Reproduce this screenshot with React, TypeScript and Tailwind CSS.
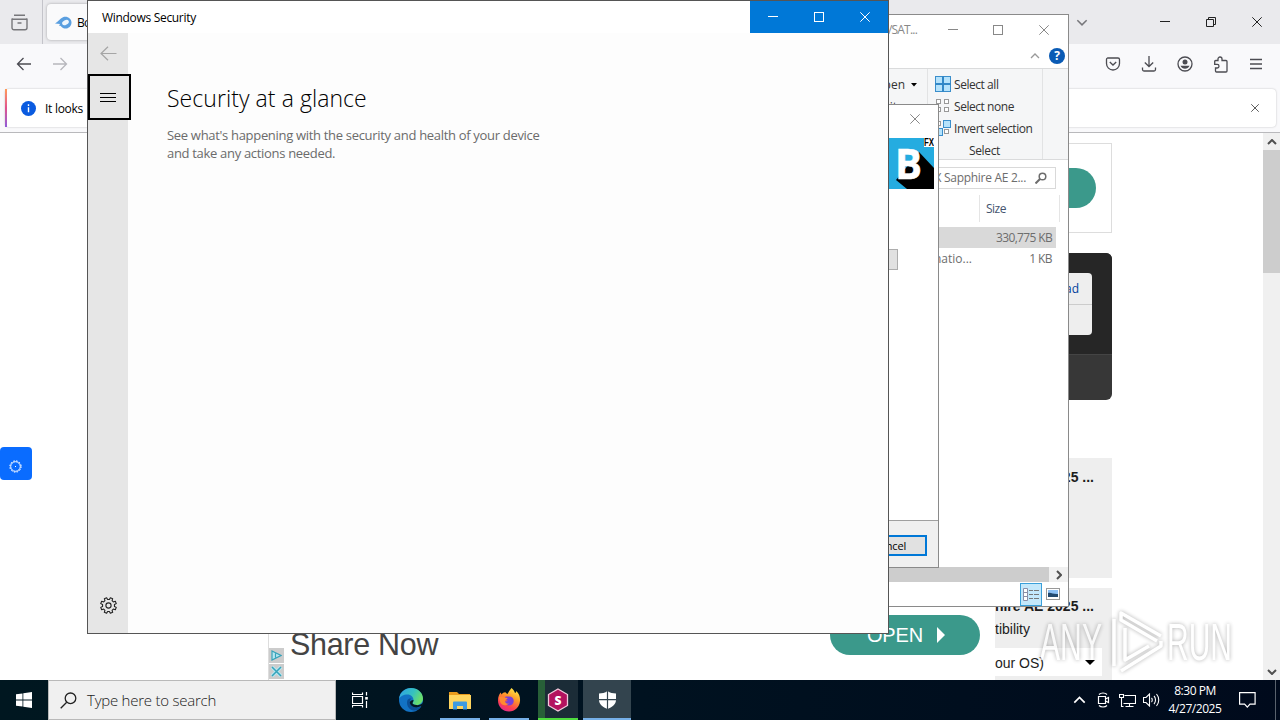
import type { ReactNode } from "react";

const stroke = { fill: "none", stroke: "currentColor" };

function CloseGlyph({ size = 10 }: { size?: number }) {
    return (
        <svg width={size} height={size} viewBox="0 0 10 10" {...stroke}>
            <path d="M.3 .3l9.400 9.400M9.700 .3L.3 9.700" />
        </svg>
    );
}

function MinGlyph() {
    return (
        <svg width="10" height="10" viewBox="0 0 10 10" {...stroke}>
            <path d="M0 4.500h10" />
        </svg>
    );
}

function MaxGlyph() {
    return (
        <svg width="10" height="10" viewBox="0 0 10 10" {...stroke}>
            <rect x=".5" y=".5" width="9" height="9" />
        </svg>
    );
}

function Arrow({ flip = false }: { flip?: boolean }) {
    return (
        <svg width="16" height="14" viewBox="0 0 16 14" {...stroke} strokeWidth="1.3" className={flip ? "rotate-180" : ""}>
            <path d="M15 7H1.5M7.5 1l-6 6 6 6" />
        </svg>
    );
}

function Chevron({ className = "" }: { className?: string }) {
    return (
        <svg width="10" height="6" viewBox="0 0 10 6" {...stroke} strokeWidth="1.3" className={className}>
            <path d="M1 5l4-4 4 4" />
        </svg>
    );
}

/* ---------- Browser ---------- */

function BrowserTabs() {
    return (
        <div className="flex h-11 items-center bg-[#eaeaed]">
            <div className="flex h-full w-[43px] items-center justify-end border-r border-[#c4c4ca] pr-[14px] text-[#77777b]">
                <svg width="17" height="17" viewBox="0 0 17 17" {...stroke} strokeWidth="1.4">
                    <path d="M3 1.2h11M1 5.2h15v8.6a2 2 0 0 1-2 2H3a2 2 0 0 1-2-2zM1 5.5l1.2-1M16 5.5l-1.2-1M6.5 9h4" />
                </svg>
            </div>
            <div className="ml-[4px] flex h-9 w-[200px] items-center gap-[5px] rounded bg-[#fafafb] pl-2 shadow-[0_0_3px_rgba(0,0,0,0.3)]">
                <svg width="17" height="13" viewBox="0 0 17 13">
                    <path d="M0 7.500C3 6 5 2.500 8 1.200 12 -.5 16.500 2.500 16.500 6.500S13 13 9.500 12.500C6.500 12 6.500 9.500 4 9.800L5 8z" fill="#5a9fe0" />
                    <ellipse cx="10.500" cy="6.500" rx="3.600" ry="2.300" transform="rotate(-30 10.500 6.500)" fill="#eef6fd" />
                </svg>
                <span className="pt-px text-[12px] tracking-[-0.8px]">Bo</span>
            </div>
            <div className="flex-1" />
            <Chevron className="mr-[54px] h-[7px] w-3 rotate-180 text-[#77777b]" />
            <div className="flex items-center text-[#222]">
                <span className="flex w-[46px] justify-center"><MinGlyph /></span>
                <span className="flex w-[46px] justify-center">
                    <svg width="10" height="10" viewBox="0 0 10 10" {...stroke}>
                        <path d="M.5 2.500h7v7h-7zM2.500 2.500v-2h7v7h-2" />
                    </svg>
                </span>
                <span className="flex w-[46px] justify-center"><CloseGlyph /></span>
            </div>
        </div>
    );
}

function BrowserNav() {
    return (
        <div className="flex h-11 items-center bg-[#f9f9fb] pr-[17px] pb-[4px] pl-4 text-[#4c4c52]">
            <Arrow />
            <div className="ml-5 text-[#b7b7bc]"><Arrow flip /></div>
            <div className="flex-1" />
            <div className="flex items-center gap-5">
                <svg width="16" height="14" viewBox="0 0 16 14" {...stroke} strokeWidth="1.3">
                    <path d="M2.500 1h10.500a1.500 1.500 0 0 1 1.500 1.500V6.500a6.500 6.500 0 0 1-13 0V2.500A1.500 1.500 0 0 1 2.500 1zM4.800 5l3.200 3 3.200-3" />
                </svg>
                <svg width="16" height="16" viewBox="0 0 16 16" {...stroke} strokeWidth="1.3">
                    <path d="M8 0v10.500M3.800 6.500L8 10.500l4.200-4M1.500 11.500v2a1.500 1.500 0 0 0 1.500 1.500h10a1.500 1.500 0 0 0 1.500-1.500v-2" />
                </svg>
                <svg width="16" height="16" viewBox="0 0 16 16" {...stroke} strokeWidth="1.3">
                    <circle cx="8" cy="8" r="7" />
                    <circle cx="8" cy="6" r="2.500" fill="currentColor" stroke="none" />
                    <path d="M3.500 9.800h9c-.8 2-2.500 3-4.500 3s-3.700-1-4.500-3z" fill="currentColor" stroke="none" />
                </svg>
                <svg width="16" height="17" viewBox="0 0 16 17" {...stroke} strokeWidth="1.300">
                    <path d="M5 4.500V3a2 2 0 0 1 4 0v1.500h4a1 1 0 0 1 1 1V15a1 1 0 0 1-1 1H3.500a1 1 0 0 1-1-1v-3h1.700a1.700 1.700 0 0 0 0-3.600H1.700V5.500a1 1 0 0 1 1-1z" />
                </svg>
                <svg width="14" height="12" viewBox="0 0 14 12" {...stroke} strokeWidth="1.300">
                    <path d="M1 1.500h12M1 6h12M1 10.500h12" />
                </svg>
            </div>
        </div>
    );
}

function BrowserNotice() {
    return (
        <div className="flex h-[45px] items-start border-b border-[#b9b9bc] bg-[#f9f9fb] pr-1 pl-[5px]">
            <div className="mt-px flex h-[38px] flex-1 items-center rounded bg-white shadow-[0_0_2px_rgba(0,0,0,0.25)]">
                <div className="h-full w-[2px] bg-linear-to-b from-[#ff9a55] via-[#e0508c] to-[#9059d8]" />
                <svg width="15" height="15" viewBox="0 0 15 15" className="ml-[14px]">
                    <circle cx="7.500" cy="7.500" r="7.500" fill="#0a5be0" />
                    <path d="M7.500 6.300v5M7.500 3.300v1.600" stroke="#fff" strokeWidth="1.400" />
                </svg>
                <span className="ml-[9px] pt-px text-[12px] tracking-[-0.28px]">It looks</span>
                <div className="flex-1" />
                <span className="mr-[17px] text-[#333]"><CloseGlyph size={8} /></span>
            </div>
        </div>
    );
}

function AdBanner() {
    return (
        <div className="mt-auto flex h-[90px] w-full border-x border-[#ddd] bg-white font-['Liberation_Sans',Arial,sans-serif]">
            <div className="flex w-[15px] flex-col justify-end gap-px pb-px">
                <span className="flex h-[15px] items-center justify-center bg-[#ccc]">
                    <svg width="11" height="11" viewBox="0 0 11 11" fill="#b8e7f1" stroke="#36a3ba" strokeWidth="1.200"><path d="M1 1l9 4.500-9 4.500zM4.500 3.500v4" /></svg>
                </span>
                <span className="flex h-[15px] items-center justify-center bg-[#ccc]">
                    <svg width="11" height="11" viewBox="0 0 11 11" fill="none">
                        <path d="M1 1l9 9M10 1l-9 9" stroke="#b8e7f1" strokeWidth="3.500" />
                        <path d="M1 1l9 9M10 1l-9 9" stroke="#36a3ba" strokeWidth="1.500" />
                    </svg>
                </span>
            </div>
            <span className="ml-[6px] pt-[36px] text-[30.500px] leading-[36px] tracking-[-0.3px] text-[#444]">Share Now</span>
            <div className="flex-1" />
            <div className="mt-[25px] mr-[15px] flex h-10 w-[150px] items-center rounded-full bg-[#3b998b] pl-[37px] text-[20px] tracking-[-0.2px] text-white">
                OPEN
                <svg width="8" height="16" viewBox="0 0 8 16" className="ml-[14px]"><path d="M0 0l8 8-8 8z" fill="#fff" /></svg>
            </div>
        </div>
    );
}

function PageAside() {
    return (
        <div className="flex h-[547px] w-[117px] flex-col overflow-hidden pt-[10px] font-['Liberation_Sans',Arial,sans-serif] text-[#1c1c1c]">
            <div className="flex h-[90px] shrink-0 items-center justify-end border border-[#ddd] pr-[15px]">
                <div className="h-10 w-[90px] rounded-full bg-[#3b998b]" />
            </div>
            <div className="mt-5 flex h-[147px] shrink-0 flex-col overflow-hidden rounded-md bg-[#373737]">
                <div className="flex h-[102px] justify-end border-b border-[#444] bg-[#262626] pt-5 pr-5">
                    <div className="h-[62px] w-[90px] rounded bg-[#eee]">
                        <div className="h-8 border-b border-[#ccc] pr-[13px] text-right font-['Open_Sans','Noto_Sans',sans-serif] text-[12px] leading-8 text-[#003e9c]">ad</div>
                    </div>
                </div>
            </div>
            <div className="mt-[58px] h-[120px] shrink-0 bg-[#eee] pt-[9px] pr-[18px] text-right text-[14px] leading-5 font-bold">25 ...</div>
            <div className="mt-[10px] h-[92px] shrink-0 bg-[#eee] pt-[8px]">
                <div className="flex h-5 justify-end pr-[18px] text-[14px] leading-5 font-bold whitespace-nowrap">phire AE 2025 ...</div>
                <div className="h-8 w-[35px] text-right text-[14px] leading-[27px] whitespace-nowrap">tibility</div>
                <div className="mr-[10px] flex h-[28px] items-center justify-between bg-white pr-[7px]">
                    <span className="w-[46px] pt-[2px] text-right text-[14px] whitespace-nowrap">our OS)</span>
                    <svg width="10" height="5" viewBox="0 0 10 5"><path d="M0 0h10l-5 5z" /></svg>
                </div>
            </div>
        </div>
    );
}

function PageScrollbar() {
    return (
        <div className="flex w-[17px] flex-col items-center bg-[#f0f0f0] text-[#505050]">
            <span className="flex h-[17px] items-center"><Chevron className="stroke-2" /></span>
            <div className="h-[123px] w-full bg-[#cdcdcd]" />
            <div className="flex-1" />
            <span className="flex h-[17px] items-center"><Chevron className="rotate-180 stroke-2" /></span>
        </div>
    );
}

function Browser() {
    return (
        <div className="flex h-[680px] flex-col">
            <BrowserTabs />
            <BrowserNav />
            <BrowserNotice />
            <div className="flex h-[547px] bg-white">
                <div className="w-[268px] pt-[314px]">
                    <div className="flex h-[33px] w-8 items-center justify-center rounded bg-[#0a6cff] pt-[6px] pr-px text-white">
                        <svg width="13" height="13" viewBox="0 0 13 13" {...stroke}>
                            <circle cx="6.500" cy="6.500" r="4.800" />
                            <circle cx="6.500" cy="6.500" r="5.700" strokeDasharray="1.490 1.490" />
                            <path d="M6 7l1-1" />
                        </svg>
                    </div>
                </div>
                <div className="flex w-[728px]"><AdBanner /></div>
                <div className="-ml-px"><PageAside /></div>
                <div className="flex-1" />
                <PageScrollbar />
            </div>
        </div>
    );
}

/* ---------- File explorer ---------- */

const selectItems = [
    { label: "Select all", filled: [true, true, true, true] },
    { label: "Select none", filled: [false, false, false, false] },
    { label: "Invert selection", filled: [false, true, true, false] },
];

function SelectIcon({ filled }: { filled: boolean[] }) {
    const all = filled.every(Boolean);
    return (
        <svg width="16" height="16" viewBox="0 0 16 16">
            {filled.map((on, i) => {
                const size = on ? 7 : 4;
                const x = (i % 2) * 8 + (on ? 0.5 : 1.5);
                const y = Math.floor(i / 2) * 8 + (on ? 0.5 : 1.5);
                return <rect key={i} x={x} y={y} width={size} height={size} fill={on ? "#b5e2fb" : "#fff"} stroke={on ? "#3a8ecb" : "#999"} />;
            })}
            {all && <path d="M8 0v16M0 8h16" stroke="#2b82c4" />}
        </svg>
    );
}

function Explorer() {
    return (
        <div className="absolute top-[14px] left-[699px] flex h-[593px] w-[370px] flex-col border border-[#8a8a8a] bg-white text-[12px] text-[#333]">
            <div className="flex h-[29px] items-center text-[#888]">
                <span className="w-[218px] text-right tracking-[-0.8px]">/SAT...</span>
                <div className="ml-[13px] flex">
                    <span className="flex w-[46px] justify-center"><MinGlyph /></span>
                    <span className="flex w-[44px] justify-center"><MaxGlyph /></span>
                    <span className="flex w-[48px] justify-center"><CloseGlyph /></span>
                </div>
            </div>
            <div className="flex h-[25px] items-center justify-end gap-[9px] border-b border-[#dadbdc] pr-[3px] text-[#999]">
                <Chevron />
                <span className="flex h-4 w-4 items-center justify-center rounded-full bg-[#0a5bb5] text-[12px] font-bold text-white">?</span>
            </div>
            <div className="flex h-[91px] border-b border-[#dadbdc] bg-[#f5f6f7]">
                <div className="w-[228px] border-r border-[#e2e3e4] pt-[5px] pr-[10px] leading-[22px]">
                    <div className="flex items-center justify-end gap-[6px]">
                        pen
                        <svg width="6" height="4" viewBox="0 0 6 4"><path d="M0 0h6L3 3.500z" /></svg>
                    </div>
                    <div className="mr-5 text-right">it</div>
                </div>
                <div className="w-[115px] border-r border-[#e2e3e4] pt-1 pl-[7px]">
                    {selectItems.map((item) => (
                        <div key={item.label} className="flex h-[22px] items-center gap-[3px] tracking-[-0.45px] whitespace-nowrap">
                            <SelectIcon filled={item.filled} />
                            <span className="pt-px">{item.label}</span>
                        </div>
                    ))}
                    <div className="mr-[8px] text-center leading-[24px] tracking-[-0.35px]">Select</div>
                </div>
            </div>
            <div className="flex h-[35px] justify-end pt-[7px] pr-[12px]">
                <div className="flex h-[22px] w-[170px] items-center justify-end gap-[9px] border border-[#d9d9d9] pr-[8px] text-[#6d6d6d]">
                    <span className="whitespace-nowrap tracking-[-0.3px]">X Sapphire AE 2...</span>
                    <svg width="12" height="12" viewBox="0 0 12 12" {...stroke} strokeWidth="1.500" className="shrink-0"><circle cx="7.500" cy="4.500" r="3.300" /><path d="M5 7l-4.500 4.500" strokeWidth="2" /></svg>
                </div>
            </div>
            <div className="flex h-[27px]">
                <div className="w-[280px] border-r border-[#e5e5e5]" />
                <div className="w-20 border-r border-[#e5e5e5] pl-[6px] leading-[28px] tracking-[-0.5px] text-[#44546f]">Size</div>
            </div>
            <div className="mt-[5px] mr-[12px] h-[21px] bg-[#d9d9d9] pr-1 text-right leading-[22px] tracking-[-0.65px] text-[#6d6d6d]">330,775 KB</div>
            <div className="mr-[12px] flex h-[21px] justify-between pr-1 leading-[22px] text-[#6d6d6d]">
                <span className="w-[272px] text-right">natio...</span>
                <span className="tracking-[-0.6px]">1 KB</span>
            </div>
            <div className="flex-1" />
            <div className="flex h-[15px] bg-[#f0f0f0]">
                <div className="w-[349px] bg-[#cdcdcd]" />
                <div className="flex flex-1 items-center justify-center text-[#505050]"><Chevron className="rotate-90 stroke-2" /></div>
            </div>
            <div className="flex h-[24px] items-center justify-end gap-1 pr-[8px]">
                <span className="flex h-[23px] w-[22px] items-center justify-center border border-[#3aa0da] bg-[#c4e8fb]">
                    <svg width="16" height="13" viewBox="0 0 16 13" {...stroke}>
                        <path d="M.5 .5h4v12h-4zM.5 4.500h4M.5 8.500h4" stroke="#8a8fa8" fill="#fff" />
                        <path d="M6 2.500h4M11 2.500h5M6 6.500h4M11 6.500h5M6 10.500h4M11 10.500h5" stroke="#777" />
                    </svg>
                </span>
                <svg width="14" height="12" viewBox="0 0 14 12">
                    <rect x=".5" y=".5" width="13" height="11" fill="#fff" stroke="#999" />
                    <path d="M2 2h10v7H2z" fill="#8cc0f5" />
                    <path d="M2 5c3-1 5 1.500 10 1v3H2z" fill="#234a70" />
                </svg>
            </div>
        </div>
    );
}

/* ---------- Setup dialog ---------- */

function SetupDialog() {
    return (
        <div className="absolute top-[104px] left-[699px] flex h-[464px] w-[240px] flex-col border border-[#8a8a8a] bg-white text-[11px]">
            <div className="flex h-[33px] justify-end pt-[9px] pr-[18px] text-[#888]"><CloseGlyph /></div>
            <div className="flex justify-end pr-[4px]">
                <svg width="51" height="52" viewBox="0 0 51 52">
                    <rect width="51" height="51" fill="#25ace0" />
                    <path d="M36 14L51 30V51H24L13 42z" fill="#000" />
                    <text x="12" y="41" fontFamily="Open Sans" fontWeight="700" fontSize="42" fill="#fff" stroke="#fff" strokeWidth=".6" textLength="27" lengthAdjust="spacingAndGlyphs">B</text>
                    <path d="M41 0h10v9H41z" fill="#fff" />
                    <text x="41" y="8" fontFamily="Liberation Sans" fontWeight="700" fontSize="10.500" textLength="10" lengthAdjust="spacingAndGlyphs">FX</text>
                </svg>
            </div>
            <div className="mt-[59px] mr-10 ml-auto h-[21px] w-[75px] border border-[#adadad] bg-[#e1e1e1]" />
            <div className="flex-1" />
            <div className="flex h-[47px] justify-end border-t border-[#a0a0a0] bg-[#f0f0f0] pt-[14px] pr-[11px]">
                <div className="h-[21px] w-[75px] border-2 border-[#0078d7] bg-[#e1e1e1] pr-[19px] text-right leading-[18px] tracking-[-0.200px] text-black">ncel</div>
            </div>
        </div>
    );
}

/* ---------- Windows Security ---------- */

function Gear() {
    const d = Array.from({ length: 8 }, (_, i) => {
        const pt = (r: number, deg: number) => {
            const a = ((i * 45 + 22.5 + deg) * Math.PI) / 180;
            return `${(8.5 + r * Math.cos(a)).toFixed(2)} ${(8.5 + r * Math.sin(a)).toFixed(2)}`;
        };
        return `${i ? "L" : "M"}${pt(6, -14)}L${pt(8, -9)}L${pt(8, 9)}L${pt(6, 14)}`;
    }).join("");
    return (
        <svg width="17" height="17" viewBox="0 0 17 17" {...stroke} strokeWidth="1.100">
            <path d={d + "Z"} strokeLinejoin="round" />
            <circle cx="8.500" cy="8.500" r="2.600" />
        </svg>
    );
}

function SecurityWindow() {
    return (
        <div className="absolute top-0 left-[87px] flex h-[634px] w-[802px] flex-col border border-[#555] bg-[#fdfdfd] text-black">
            <div className="flex h-8 items-center bg-white">
                <span className="pt-px pl-[14px] text-[12px] tracking-[-0.31px]">Windows Security</span>
                <div className="flex-1" />
                <div className="flex h-8 items-center bg-[#0078d7] text-white">
                    <span className="flex w-[46px] justify-center"><MinGlyph /></span>
                    <span className="flex w-[46px] justify-center"><MaxGlyph /></span>
                    <span className="flex w-[46px] justify-center"><CloseGlyph /></span>
                </div>
            </div>
            <div className="flex flex-1">
                <div className="flex w-10 flex-col bg-[#e6e6e6]">
                    <div className="flex h-[41px] items-center justify-center pb-px text-[#a5a5a5]">
                        <svg width="17" height="15" viewBox="0 0 17 15" {...stroke} strokeWidth="1.200"><path d="M16.500 7.500H1M8 .7L1 7.500l7 6.800" /></svg>
                    </div>
                    <div className="flex h-[46px] w-[43px] items-center justify-center border-2 border-black bg-[#e6e6e6] pr-[3px]">
                        <svg width="16" height="9" viewBox="0 0 16 9" {...stroke}><path d="M0 .5h16M0 4.500h16M0 8.500h16" /></svg>
                    </div>
                    <div className="flex-1" />
                    <div className="mb-[19px] flex justify-center pl-px text-[#222]"><Gear /></div>
                </div>
                <div className="pt-[48px] pl-[39px]">
                    <h1 className="text-[23px] leading-[34px] font-light tracking-[0.06px] whitespace-nowrap">Security at a glance</h1>
                    <p className="mt-[11px] text-[13px] leading-[18px] tracking-[-0.31px] text-[#6b6b6b]">
                        See what's happening with the security and health of your device
                        <br />
                        and take any actions needed.
                    </p>
                </div>
            </div>
        </div>
    );
}

/* ---------- Taskbar ---------- */

function TaskItem({ children, bar = "" }: { children: ReactNode; bar?: string }) {
    return (
        <div className="flex h-10 w-[49px] flex-col items-center">
            <div className="flex flex-1 items-center pt-[2px]">{children}</div>
            <div className={`h-[2px] ${bar}`} />
        </div>
    );
}

function EdgeIcon() {
    return (
        <svg width="24" height="24" viewBox="0 0 24 24">
            <defs>
                <linearGradient id="edgeTop" x1="0" x2="1" y1="0" y2=".4">
                    <stop offset="0" stopColor="#2f9fe8" />
                    <stop offset=".6" stopColor="#35c1c0" />
                    <stop offset="1" stopColor="#6ade6c" />
                </linearGradient>
            </defs>
            <circle cx="12" cy="12" r="12" fill="#1272c4" />
            <path d="M0 11C.8 4 6 0 12 0c7 0 12 5 12 10.500 0 4-3 6.500-6.500 6.500-3 0-4-1.200-4-2 0-.8 1-1 1-3C14.500 9 12 6.500 8.500 6.500 4.500 6.500 1 8.500 0 11z" fill="url(#edgeTop)" />
            <path d="M8.500 12c-1.500 4 .5 9.500 6 10.500 3.500.5 6-1.500 7.500-4-5 2.500-10 .5-11-3.500-.5-2 .3-3.500 1.500-4.500-2-.2-3.500.5-4 1.500z" fill="#0b4f96" />
            <path d="M10.800 14.500c.5 4 5.500 6.500 11 3.800l1.500.3.700-4c-1.500 2-4 2.700-6.500 2.500-3 0-4-1.200-4-2 0-.8 1-1 1-3-2 0-3.500 1-3.700 2.400z" fill="#041824" />
        </svg>
    );
}

function FirefoxIcon() {
    return (
        <svg width="24" height="24" viewBox="0 0 24 24">
            <defs>
                <linearGradient id="fox" x1=".8" x2=".3" y1="0" y2="1">
                    <stop offset="0" stopColor="#fff04a" />
                    <stop offset=".4" stopColor="#ff9a28" />
                    <stop offset=".75" stopColor="#ff4050" />
                    <stop offset="1" stopColor="#e22a8b" />
                </linearGradient>
            </defs>
            <path d="M14.500 0c2 1.500 3 3.500 3.500 5 1-.3 1.300-1.500 1.300-2 3 3 4 6 3.700 10C22.500 19 18 23.500 12 23.500S1 19 1 12.500C1 9 2 6.500 3.800 4.500l.7 2C5.500 5 7 4.500 8 4.300 9 4 9 5.500 10.500 6 11.500 3.500 13 2 14.500 0z" fill="url(#fox)" />
            <path d="M8 9c1-.7 2.500-.5 4-.5 3.500 0 5 2.500 4.700 5-.3 2.700-2.400 4-4.700 4-3 0-5-2-4.700-4.500 1.200.7 2.500.6 3.700-.2-2.200-.2-3-1.500-3-3.800z" fill="#7a3fd8" />
            <path d="M2 9c2-1 4-.5 5 .5L10.500 10c0 1.500-2.500 1.500-2.500 3 0 2 2 3 4 2.500-3 3-8 2-9-2z" fill="#ff8a30" />
        </svg>
    );
}

function Taskbar() {
    return (
        <div className="flex h-10 items-center bg-linear-to-r from-[#001720] via-[#001220] to-[#000a1c] text-white">
            <div className="flex w-12 justify-center">
                <svg width="16" height="16" viewBox="0 0 16 16" fill="#fff"><path d="M0 2.300L6.500 1.400v6.200H0zM7.300 1.300L16 0v7.600H7.300zM0 8.400h6.500v6.200L0 13.700zM7.300 8.400H16V16l-8.700-1.300z" /></svg>
            </div>
            <div className="flex h-10 w-72 items-center border border-[#b9b9b9] bg-[#f0f0f0] pl-[11px] text-[#222]">
                <svg width="17" height="17" viewBox="0 0 17 17" {...stroke} strokeWidth="1.300"><circle cx="10.500" cy="6.300" r="5.300" /><path d="M6.700 10.200L.7 16.300" /></svg>
                <span className="ml-[10px] text-[15px] font-light tracking-[-0.24px] text-[#222]">Type here to search</span>
            </div>
            <div className="mr-[2px] flex w-12 justify-center">
                <svg width="16" height="16" viewBox="0 0 16 16" {...stroke} strokeWidth="1.200">
                    <path d="M.5 .5v2h10v-2M.5 4.500h10v7H.5zM.5 15.500v-2h10v2M14.500 0v3.500M14.500 9v7" />
                    <path d="M13.200 5h2.600v2.600h-2.600z" fill="currentColor" stroke="none" />
                </svg>
            </div>
            <TaskItem><EdgeIcon /></TaskItem>
            <TaskItem bar="w-10 bg-[#76b0e8]">
                <svg width="22" height="19" viewBox="0 0 22 19">
                    <path d="M0 1h8l2 2h11v5H0z" fill="#e99b1c" />
                    <path d="M0 4h22v14H0z" fill="#ffd55e" />
                    <path d="M4 18.500v-7a1 1 0 0 1 1-1h12a1 1 0 0 1 1 1v7h-4V15H8v3.500z" fill="#3f9be0" />
                </svg>
            </TaskItem>
            <TaskItem bar="w-10 bg-[#76b0e8]"><FirefoxIcon /></TaskItem>
            <div className="mr-[5px] ml-[5px] flex h-10 w-10 flex-col bg-[#1b2c37]">
                <div className="flex flex-1 items-center border-l-[7px] border-[#285f38] pt-[2px] pl-[2px]">
                    <svg width="22" height="24" viewBox="0 0 22 24">
                        <path d="M11 1l9.500 5.500v11L11 23l-9.500-5.500v-11z" fill="#b3125f" stroke="#f3c9dc" strokeWidth="1.300" />
                        <text x="11" y="16.500" textAnchor="middle" fontFamily="Open Sans" fontWeight="800" fontSize="12" fill="#fff">S</text>
                    </svg>
                </div>
                <div className="h-[2px] bg-[#4fdc3f]" />
            </div>
            <div className="flex h-10 w-12 flex-col items-center bg-[#33444e]">
                <div className="flex flex-1 items-center pt-[2px]">
                    <svg width="17" height="18" viewBox="0 0 17 18">
                        <path d="M8.500 0C11 1.800 14 2.500 17 2.500V9c0 4-4 7.500-8.500 9C4 16.500 0 13 0 9V2.500C3 2.500 6 1.800 8.500 0z" fill="#fff" />
                        <path d="M8.500 0v18M0 8.700h17" stroke="#33444e" strokeWidth="1.200" />
                    </svg>
                </div>
                <div className="h-[2px] w-full bg-[#76b0e8]" />
            </div>
            <div className="flex-1" />
            <div className="flex items-center">
                <span className="flex w-6 justify-center"><Chevron className="h-[8px] w-[13px]" /></span>
                <span className="flex w-6 justify-center">
                    <svg width="13" height="16" viewBox="0 0 13 16" {...stroke} strokeWidth="1.200"><path d="M1.500 4.500h7v7h-7zM8.500 7l3-1.500v5L8.500 9M2 2.500C4 .5 8 .5 10 2.500M2 13.500c2 2 6 2 8 0" /></svg>
                </span>
                <span className="flex w-6 justify-center">
                    <svg width="17" height="14" viewBox="0 0 17 14" {...stroke} strokeWidth="1.100"><path d="M5.500 2.500h11v8H4.500M10.500 10.500v3M6.500 13.500h8M.5 1.500h4v3h-4zM2.500 4.500v9h2" /></svg>
                </span>
                <span className="flex w-6 justify-center">
                    <svg width="17" height="14" viewBox="0 0 17 14" {...stroke} strokeWidth="1.100"><path d="M.5 4.500h2.500l3.500-3.500v12L3 9.500H.5zM8.500 5c1 1 1 3 0 4M11 3c2 2 2 6 0 8M13.500 1c3 3.500 3 8.500 0 12" /></svg>
                </span>
            </div>
            <div className="flex w-[64px] flex-col items-center text-[12px] leading-[18px] tracking-[-0.45px] whitespace-nowrap">
                <span>8:30 PM</span>
                <span>4/27/2025</span>
            </div>
            <div className="flex w-[48px] pl-[12px]">
                <svg width="17" height="16" viewBox="0 0 17 16" {...stroke} strokeWidth="1.200"><path d="M.6 .6h15.500v11.500H11l-2.700 3-2.700-3h-5z" /></svg>
            </div>
            <div className="mr-[4px] h-10 w-px bg-[#59626d]" />
        </div>
    );
}

function Watermark() {
    return (
        <svg className="pointer-events-none absolute top-[604px] left-[1034px] drop-shadow-[0_0_2px_rgba(0,0,0,0.45)]" width="204" height="74" viewBox="0 0 204 74" opacity=".7">
            <g fontFamily="Liberation Sans Narrow, Liberation Sans" fontSize="51" fill="#fff">
                <text x="6" y="56" textLength="62" lengthAdjust="spacingAndGlyphs">ANY</text>
                <text x="133" y="56" textLength="65" lengthAdjust="spacingAndGlyphs">RUN</text>
            </g>
            <g fill="none" stroke="#fff" strokeWidth="3.500" strokeLinejoin="round">
                <path d="M91 24v32l24-14" />
                <path d="M80 62V15M127 32L87 9v7l36 21" />
                <path d="M127 37v5L87 67" />
            </g>
        </svg>
    );
}

export default function App() {
    return (
        <div className="relative h-[720px] w-[1280px] overflow-hidden bg-white font-['Open_Sans','Noto_Sans',sans-serif]">
            <Browser />
            <Explorer />
            <SetupDialog />
            <SecurityWindow />
            <Watermark />
            <Taskbar />
        </div>
    );
}
